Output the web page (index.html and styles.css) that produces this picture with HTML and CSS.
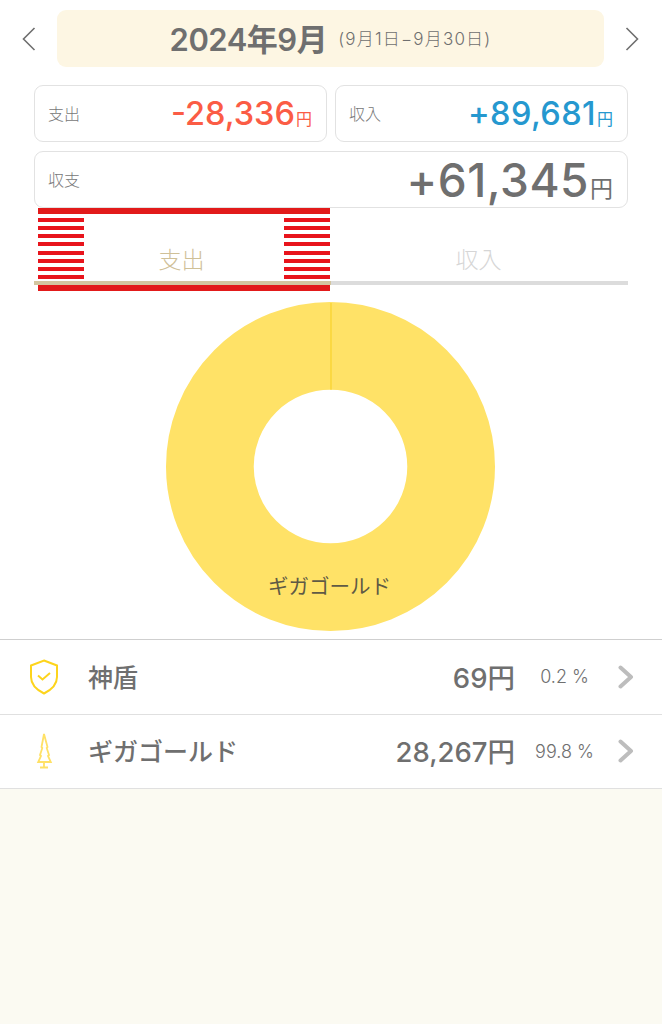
FILE: index.html
```html
<!DOCTYPE html>
<html lang="ja">
<head>
<meta charset="utf-8">
<title>2024年9月</title>
<link rel="stylesheet" href="styles.css">
</head>
<body>
<header class="month-bar">
  <svg class="nav-arrow" viewBox="0 0 14 24"><path d="M12.5 1 1.5 12l11 11"/></svg>
  <div class="month-pill">
    <span class="month-title">2024年9月</span>
    <span class="month-range">(9月1日−9月30日)</span>
  </div>
  <svg class="nav-arrow" viewBox="0 0 14 24"><path d="M1.5 1l11 11-11 11"/></svg>
</header>
<section class="summary">
  <div class="card">
    <span class="card-label">支出</span>
    <span class="card-value expense">-28,336<small>円</small></span>
  </div>
  <div class="card">
    <span class="card-label">収入</span>
    <span class="card-value income">+89,681<small>円</small></span>
  </div>
  <div class="card card-wide">
    <span class="card-label">収支</span>
    <span class="card-value balance">+61,345<small>円</small></span>
  </div>
</section>
<nav class="tabs">
  <div class="tab tab-active">
    支出
    <div class="redact" aria-hidden="true">
      <div class="redact-bar"></div>
      <div class="redact-middle">
        <div class="redact-stripes"></div>
        <div class="redact-stripes"></div>
      </div>
      <div class="redact-bar redact-bottom"></div>
    </div>
  </div>
  <div class="tab">収入</div>
</nav>
<section class="chart">
  <svg class="donut" viewBox="0 0 330 330">
    <circle class="donut-ring" cx="165" cy="165" r="121"/>
    <path class="donut-slice" d="M165.500 1v87"/>
    <text class="donut-label" x="164" y="293" text-anchor="middle">ギガゴールド</text>
  </svg>
</section>
<ul class="list">
  <li class="row">
    <svg class="row-icon" viewBox="0 0 30 36"><path class="icon-shield" d="M15 1.500 28 6.500V18c0 8-6 13-13 16.500C8 31 2 26 2 18V6.500Z"/><path class="icon-shield" d="M9 16.500l4.500 4 7.500-6.500"/></svg>
    <span class="row-name">神盾</span>
    <span class="row-amount">69円</span>
    <span class="row-percent">0.2 %</span>
    <svg class="row-chevron" viewBox="0 0 16 24"><path d="M2.500 2.500 13 12 2.500 21.500"/></svg>
  </li>
  <li class="row">
    <svg class="row-icon" viewBox="0 0 30 36"><path class="icon-tree" d="M15 1 18.500 14l-.8 1 2.300 7-1 1 2.800 6H9.200L12 23l-1-1 2.300-7-.8-1ZM15 29v5M11 34.500h8"/></svg>
    <span class="row-name">ギガゴールド</span>
    <span class="row-amount">28,267円</span>
    <span class="row-percent">99.8 %</span>
    <svg class="row-chevron" viewBox="0 0 16 24"><path d="M2.500 2.500 13 12 2.500 21.500"/></svg>
  </li>
</ul>
<div class="footer-fill"></div>
</body>
</html>
```
FILE: styles.css
```css
* { box-sizing: border-box; }
html, body { margin: 0; height: 100%; }
body {
  display: flex;
  flex-direction: column;
  height: 1024px;
  overflow: hidden;
  background: #fff;
  color: #6f6f6f;
  font-family: Inter, "Noto Sans CJK JP", sans-serif;
}
.month-bar {
  display: flex;
  align-items: center;
  justify-content: space-between;
  padding: 10px 23px 0 22px;
}
.nav-arrow { width: 14px; height: 24px; fill: none; stroke: #6f6f6f; stroke-width: 1.6; }
.month-pill {
  width: 547px;
  height: 57px;
  background: #fdf6e3;
  border-radius: 9px;
  display: flex;
  align-items: center;
  justify-content: center;
  gap: 11px;
}
.month-title { font-size: 31px; font-weight: 600; letter-spacing: -0.5px; position: relative; top: -1px; }
.month-range { font-size: 17px; font-weight: 300; letter-spacing: 1.2px; position: relative; top: -1px; }
.summary {
  display: grid;
  grid-template-columns: 293px 293px;
  gap: 9px 8px;
  margin: 18px 0 0 34px;
}
.card {
  height: 57px;
  border: 1px solid #e2e2e2;
  border-radius: 9px;
  display: flex;
  align-items: center;
  justify-content: space-between;
  padding: 0 14px 0 13px;
  background: #fff;
}
.card-wide { grid-column: 1 / 3; }
.card-label { font-size: 16px; font-weight: 300; color: #777; position: relative; top: -1px; }
.card-value { font-size: 32.500px; font-weight: 500; white-space: nowrap; }
.card-value small { font-size: 16px; font-weight: 400; margin-left: 1px; }
.expense { color: #fb5c45; }
.income { color: #2598cf; letter-spacing: 0.4px; }
.income small { letter-spacing: 0; }
.balance { font-size: 46px; letter-spacing: 0.500px; }
.balance small { font-size: 23px; letter-spacing: 0; }
.tabs {
  display: grid;
  grid-template-columns: 297px 297px;
  margin-left: 34px;
  height: 77px;
}
.tab {
  position: relative;
  display: flex;
  align-items: flex-end;
  justify-content: center;
  padding: 0 2px 4px 0;
  border-bottom: 4px solid #dcdcdc;
  font-size: 23px;
  font-weight: 300;
  line-height: 34px;
  color: #d6d6d6;
}
.tab-active { color: #cfc097; border-bottom-color: #d3c6a0; }
.redact {
  position: absolute;
  left: 4px;
  top: 0;
  width: 292px;
  height: 83px;
  display: flex;
  flex-direction: column;
}
.redact-bar { height: 6px; background: #e21a1a; flex: none; }
.redact-middle { flex: 1; display: flex; justify-content: space-between; }
.redact-stripes {
  width: 46px;
  height: 63px;
  margin-top: 4px;
  background: repeating-linear-gradient(to bottom, #e8141c 0 4px, #fff 4px 8.14px);
}
.redact-bottom { height: 6px; }
.chart { display: flex; justify-content: center; padding: 17px 1px 1px 0; }
.donut { width: 329px; height: 329px; display: block; }
.donut-ring { fill: none; stroke: #ffe267; stroke-width: 88; }
.donut-slice { fill: none; stroke: #f9d32b; stroke-width: 1.2; }
.donut-label { font-size: 20.600px; fill: #5f5a45; font-family: "Noto Sans CJK JP", sans-serif; font-weight: 400; }
.list { list-style: none; margin: 7px 0 0; padding: 0; border-top: 1px solid #cfcfcf; }
.row {
  display: flex;
  align-items: center;
  height: 74.500px;
  border-bottom: 1px solid #e0e0e0;
  padding: 0 0 0 29px;
}
.row-icon { width: 30px; height: 36px; flex: none; fill: none; }
.icon-shield { fill: none; stroke: #fdd41c; stroke-width: 2; }
.icon-tree { fill: none; stroke: #ffe166; stroke-width: 1.8; }
.row-name { margin-left: 29px; font-size: 25px; font-weight: 500; position: relative; top: -1px; }
.row-amount { margin-left: auto; font-size: 27.500px; font-weight: 500; white-space: nowrap; position: relative; top: -1px; }
.row-percent { width: 80px; text-align: center; margin-left: 9.500px; font-size: 18px; font-weight: 300; white-space: nowrap; }
.row-chevron { width: 16px; height: 24px; flex: none; fill: none; stroke: #bdbdbd; stroke-width: 4; stroke-linecap: round; stroke-linejoin: round; margin: 0 28.500px 0 13px; }
.footer-fill { flex: 1; background: #fbfaf2; }
```
